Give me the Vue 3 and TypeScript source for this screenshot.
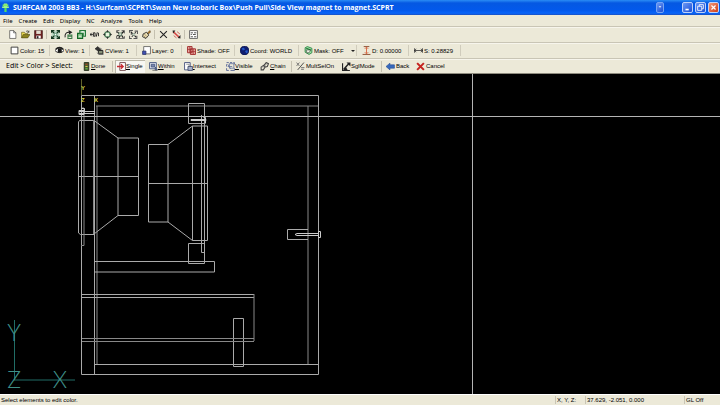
<script setup lang="ts">
interface Shape { d: string; f?: string; s?: string; w?: number }
interface Tool { icon: string; label: string }

const K = '#222'
const icons: Record<string, Shape[]> = {
  logo: [{ d: 'M5 1h6v5h3v3H2V6h3z', f: '#9ff58a' }, { d: 'M6 9h4v7H6z', f: '#52e060' }, { d: 'M3 4h10', s: '#7ee86a', w: 3 }],
  file: [{ d: 'M3 1h7l4 4v10H3z', f: '#fff', s: K }, { d: 'M10 1v4h4', s: K }],
  open: [{ d: 'M1 14V4h5l1 2h5v3', f: '#e8d850', s: '#554c10' }, { d: 'M1 14l3-6h12l-4 6z', f: '#8d8420', s: '#4a4410' }, { d: 'M9 3c2-3 4-1 5 1M14 1v3h-3', s: K, w: 1.2 }],
  save: [{ d: 'M1 1h14v14H1z', f: '#6d2222', s: '#301010' }, { d: 'M4 1h8v6H4z', f: '#e4ddd0' }, { d: 'M4 10h8v5H4z', f: '#fff' }, { d: 'M5 11h3v4H5z', f: '#222' }],
  zoomall: [{ d: 'M1 1h14v14H1z', f: '#bcd8c4' }, { d: 'M1 5V1h5M10 1h5v4M15 11v4h-5M6 15H1v-4M2 2l4 4M14 2l-4 4M14 14l-4-4M2 14l4-4', s: '#143820', w: 2.2 }, { d: 'M6 6h4v4H6z', f: '#fff', s: '#27734a' }],
  rotate: [{ d: 'M2 13c-1-6 2-9 7-9', s: K, w: 1.8 }, { d: 'M8 0l7 4-6 4z', f: K }, { d: 'M7 14V9h7v6H7zM8 11h6', s: '#387846', w: 1.8 }],
  copy: [{ d: 'M1 6h9v9H1z', f: '#80bd83', s: '#136626', w: 2 }, { d: 'M5 1h10v10h-4V6H5z', f: '#d3ead2', s: '#25783a', w: 2 }, { d: 'M3 11h5M8 3h4', s: '#fff', w: 1.5 }],
  pan: [{ d: 'M0 8h5M3 5L0 8l3 3', s: K, w: 1.6 }, { d: 'M6 5h3v6H6zM11 12l2-8M15 5v6', s: '#222', w: 1.7 }],
  center: [{ d: 'M8 0l3 4H5zM8 16l3-4H5zM0 8l4-3v6zM16 8l-4-3v6z', f: K }, { d: 'M4 4h8v8H4z', s: '#39764c', w: 1.8 }, { d: 'M5 5h6v6H5z', f: '#e7f4dd' }],
  window: [{ d: 'M1 5V1h5M10 1h5v5M1 10v5h14v-4', s: '#555', w: 1.5 }, { d: 'M2 3l5 5M14 2L8 9M5 14l4-6 4 6M10 4h4M2 10h4', s: K, w: 2 }, { d: 'M5 5h5v5H5z', f: '#cfd8ca', s: '#50785c' }],
  previous: [{ d: 'M1 5V1h6M10 2h5v5M14 10v5H8M5 15H1v-5', s: '#555', w: 1.8 }, { d: 'M3 3l10 10M5 12l7-8M3 7h6', s: K, w: 2 }, { d: 'M6 6h5v4H6z', f: '#bccdbb' }],
  brush: [{ d: 'M10 5l4-4 1 3-4 3z', f: '#b87b28', s: '#493717' }, { d: 'M2 7l6-3 4 5-5 6-6-3z', f: '#eee1b5', s: K, w: 1.5 }, { d: 'M4 7l5 5M3 10l4 4', s: '#7a653b' }],
  cross: [{ d: 'M2 2l12 12M14 2L2 14', s: '#222', w: 1.9 }],
  trim: [{ d: 'M2 3l11 10', s: '#d64a48', w: 2.8 }, { d: 'M1 1h5L2 6zM15 15V9l-5 5z', f: '#222' }, { d: 'M9 3l5 4M3 10l5 4', s: '#c63e38', w: 1.3 }],
  list: [{ d: 'M1 1h14v14H1z', f: '#fff', s: '#555', w: 1.5 }, { d: 'M3 5h4M9 5h4M3 8h2M7 8h5M3 12h4M9 12h4', s: '#444', w: 1.6 }],
  swatch: [{ d: 'M2 2h12v12H2z', f: '#fff', s: '#333', w: 1.6 }],
  eye: [{ d: 'M0 8c4-6 12-6 16 0-4 5-12 5-16 0', f: '#fff', s: K, w: 1.6 }, { d: 'M5 4h7v8H5z', f: '#191919' }, { d: 'M1 6c4-5 10-5 14 0', s: K, w: 2.2 }],
  cview: [{ d: 'M0 5l5-4 6 6-4 3z', f: '#333', s: K }, { d: 'M6 8h8v6H6z', f: '#88927a', s: K, w: 1.7 }, { d: 'M4 12l3 3h8M9 3l3 3', s: '#666', w: 1.7 }],
  layer: [{ d: 'M3 1h12v13H3z', f: '#fff', s: '#555', w: 1.4 }, { d: 'M1 9h6v6H1z', f: '#4050b4', s: '#293267', w: 1.3 }],
  shade: [{ d: 'M1 1h8v11H1zM6 5h9v10H6z', f: '#edb1a9', s: '#a12d2d', w: 1.7 }, { d: 'M1 6h8M5 1v11M6 10h9M11 5v10', s: '#a12d2d', w: 1.4 }],
  globe: [{ d: 'M8 0a8 8 0 1 0 .1 0', f: '#101e70', s: '#0b1440' }, { d: 'M3 4l4-1 2 3-4 2zM9 9l4-2 1 4-3 2z', f: '#2358c8' }],
  mask: [{ d: 'M2 3l4-2 8 3v8l-5 3-7-4z', f: '#9be4a0', s: '#2f854a', w: 1.6 }, { d: 'M4 7h8l-3 5H5z', f: '#eef7e8', s: '#333' }, { d: 'M4 4l8 3', s: '#236b39', w: 2 }],
  depth: [{ d: 'M3 1h10M1 15h14', s: '#8b4a2d', w: 1.6 }, { d: 'M8 2v12M5 5l3-3 3 3M5 11l3 3 3-3', s: '#d86a45', w: 1.7 }],
  scale: [{ d: 'M0 8h16M1 4v8M15 4v8M4 5L1 8l3 3M12 5l3 3-3 3', s: '#333', w: 1.4 }],
  done: [{ d: 'M4 1h8v14H4z', f: '#435b2d', s: '#242b1a', w: 1.6 }, { d: 'M6 3h4v2H6z', f: '#af3f28' }, { d: 'M6 7h4v2H6z', f: '#d5ca48' }, { d: 'M6 11h4v2H6z', f: '#63bd50' }],
  single: [{ d: 'M5 1h10v14H5z', f: '#fff', s: '#70484c', w: 1.6 }, { d: 'M0 8h10M7 4l4 4-4 4', s: '#c72b32', w: 2.4 }],
  within: [{ d: 'M1 1h12v11H1z', f: '#e3e7f2', s: '#44537e', w: 1.6 }, { d: 'M4 4h6v5H4zM11 9l4 5h-4z', f: '#7886ad', s: '#34436f', w: 1.2 }, { d: 'M6 15h9', s: '#444' }],
  intersect: [{ d: 'M1 1h10v13H1z', f: '#fff', s: '#44507a', w: 1.6 }, { d: 'M7 8h8v7H7z', f: '#a9b1c8', s: '#354065', w: 1.4 }, { d: 'M4 4h5v4', s: '#555' }],
  visible: [{ d: 'M1 1h4M7 1h4M13 1h2v3M1 4v4M1 11v4h4M8 15h7v-4', s: '#4d5c91', w: 1.5 }, { d: 'M3 4l5 8M6 3h8v8H6zM3 8h8', s: '#65739d', w: 1.5 }],
  chain: [{ d: 'M2 9l4-3 3 3-3 5H2zM7 6l4-5 4 2-2 5-4 1z', s: '#444', w: 1.9 }, { d: 'M5 10l6-6', s: '#777', w: 1.5 }],
  multi: [{ d: 'M3 14L14 1', s: '#333', w: 1.5 }, { d: 'M1 1l5 6M6 1L1 7M9 10h6M9 13h5', s: '#666', w: 1.5 }],
  mode: [{ d: 'M1 2v13h13', s: '#222', w: 2 }, { d: 'M3 13L12 3', s: '#222', w: 2.4 }, { d: 'M8 1h7v7zM2 14l5-5 3 5z', f: '#222' }],
  back: [{ d: 'M0 8l7-6v3h8v6H7v3z', f: '#3769bd', s: '#244b91' }],
  cancel: [{ d: 'M2 2l12 12M14 2L2 14', s: '#c5221e', w: 3.6 }],
}

const menus = ['File', 'Create', 'Edit', 'Display', 'NC', 'Analyze', 'Tools', 'Help']
const groups: Tool[][] = [
  [{ icon: 'file', label: 'New' }, { icon: 'open', label: 'Open' }, { icon: 'save', label: 'Save' }],
  [{ icon: 'zoomall', label: 'Zoom all' }, { icon: 'rotate', label: 'Rotate' }, { icon: 'copy', label: 'Copy view' }, { icon: 'pan', label: 'Pan' },
    { icon: 'center', label: 'Center' }, { icon: 'window', label: 'Zoom window' }, { icon: 'previous', label: 'Previous view' }, { icon: 'brush', label: 'Repaint' }],
  [{ icon: 'cross', label: 'Delete' }, { icon: 'trim', label: 'Trim' }],
  [{ icon: 'list', label: 'Properties' }],
]
const settings: Tool[] = [
  { icon: 'swatch', label: 'Color: 15' }, { icon: 'eye', label: 'View: 1' }, { icon: 'cview', label: 'CView: 1' },
  { icon: 'layer', label: 'Layer: 0' }, { icon: 'shade', label: 'Shade: OFF' }, { icon: 'globe', label: 'Coord: WORLD' },
  { icon: 'mask', label: 'Mask: OFF' }, { icon: 'depth', label: 'D: 0.00000' }, { icon: 'scale', label: 'S: 0.28829' },
]
const selection: Tool[] = [
  { icon: 'done', label: 'Done' }, { icon: 'single', label: 'Single' }, { icon: 'within', label: 'Within' },
  { icon: 'intersect', label: 'Intersect' }, { icon: 'visible', label: 'Visible' }, { icon: 'chain', label: 'Chain' },
  { icon: 'multi', label: 'MultSelOn' }, { icon: 'mode', label: 'SglMode' }, { icon: 'back', label: 'Back' }, { icon: 'cancel', label: 'Cancel' },
]
const underlined = ['Done', 'Single', 'Within', 'Intersect', 'Visible', 'Chain']
</script>

<template>
  <div class="app">
    <header class="title">
      <svg class="icon" viewBox="0 0 16 16"><path v-for="(p, i) in icons.logo" :key="i" :d="p.d" :fill="p.f ?? 'none'" :stroke="p.s ?? 'none'" :stroke-width="p.w ?? 1" /></svg>
      <h1>SURFCAM 2003 BB3 - H:\Surfcam\SCPRT\Swan New Isobaric Box\Push Pull\Side View magnet to magnet.SCPRT</h1>
      <button class="win drop" aria-label="Options"><svg viewBox="0 0 11 11"><path d="M3 3h5L5.500 6z" fill="#fff" /></svg></button>
      <button class="win" aria-label="Minimize"><svg viewBox="0 0 11 11"><path d="M3 8h4" stroke="#fff" stroke-width="2" /></svg></button>
      <button class="win" aria-label="Restore"><svg viewBox="0 0 11 11"><path d="M4 4V2h5v5H7M2 4h5v5H2z" stroke="#fff" fill="none" /></svg></button>
      <button class="win close" aria-label="Close"><svg viewBox="0 0 11 11"><path d="M3 3l5 5M8 3L3 8" stroke="#fff" stroke-width="1.500" /></svg></button>
    </header>

    <nav class="menu"><button v-for="m in menus" :key="m">{{ m }}</button></nav>

    <div class="bar main">
      <div v-for="(g, n) in groups" :key="n" class="group">
        <button v-for="t in g" :key="t.icon" :aria-label="t.label">
          <svg class="icon" viewBox="0 0 16 16"><path v-for="(p, i) in icons[t.icon]" :key="i" :d="p.d" :fill="p.f ?? 'none'" :stroke="p.s ?? 'none'" :stroke-width="p.w ?? 1" /></svg>
        </button>
      </div>
    </div>

    <div class="bar settings">
      <button v-for="t in settings" :key="t.icon" class="tool">
        <svg class="icon" viewBox="0 0 16 16"><path v-for="(p, i) in icons[t.icon]" :key="i" :d="p.d" :fill="p.f ?? 'none'" :stroke="p.s ?? 'none'" :stroke-width="p.w ?? 1" /></svg>
        <span>{{ t.label }}</span>
        <svg v-if="t.icon === 'mask'" class="caret" viewBox="0 0 4 4"><path d="M0 1h4L2 3z" fill="#222" /></svg>
      </button>
    </div>

    <div class="bar selection">
      <span class="prompt">Edit &gt; Color &gt; Select:</span>
      <button v-for="t in selection" :key="t.icon" class="tool" :class="t.icon">
        <svg class="icon" viewBox="0 0 16 16"><path v-for="(p, i) in icons[t.icon]" :key="i" :d="p.d" :fill="p.f ?? 'none'" :stroke="p.s ?? 'none'" :stroke-width="p.w ?? 1" /></svg>
        <span v-if="underlined.includes(t.label)"><u>{{ t.label[0] }}</u>{{ t.label.slice(1) }}</span>
        <span v-else>{{ t.label }}</span>
      </button>
    </div>

    <main class="view">
      <svg class="drawing" role="img" aria-label="Side view of speaker enclosure">
        <g class="part">
          <!-- Enclosure -->
          <path d="M81.500 21.500h237v279h-237zM94.500 21.500v279M94.500 290.500h224" />
          <path class="dim" d="M97 32v258M96 32h222M308 32v258" />
          <!-- Left driver -->
          <path d="M94 46.500H79.500L78.500 48v111l2 1.500H94M94 46.500l24 17.500M118 141.500L94 160M78.500 102.500h60M118 64h20.500v77.500H118z" />
          <path class="dim" d="M82 34h2v137.500h-3M93.500 46v114" />
          <path class="bolt" d="M79 37.500h16M79 39.500h16M79 36.500h5v4h-5zM81.500 34.500h3v4" />
          <!-- Right driver -->
          <path d="M168 70.500l24.500-18.500h15v114.500h-15L168 148M192.500 52v114.500M148.500 70.500h19.500V148h-19.500zM148.500 109.500h59" />
          <path d="M201.500 41v137.500h3V41M188.500 29.500h16v20h-16zM188.500 169.500h16v20h-16z" />
          <path class="bolt" d="M191 45.500h15v1h-15zM203.500 43.500h2v6" />
          <!-- Shelf and port -->
          <path d="M94.500 187.500h120v10.500h-120M233.500 244.500h10v48h-10zM82 220.500h172M82 223.500h172" />
          <path class="dim" d="M254 220v47M82 264.500h172M82 267.500h172" />
          <!-- Rear bolt -->
          <path d="M308 155.500h-20.500v10H308" />
          <path class="bolt" d="M318 159.500h-21l-2 1 2 1h21M318.500 157.500h2v6h-2z" />
        </g>
        <path class="cursor" d="M0 42.500h4000M472.500 0v4000" />
        <path class="origin" d="M81.500 5v16" />
        <g class="mark"><text x="81" y="16">Y</text><text x="81" y="28">Z</text><text x="94" y="28">X</text></g>
        <path class="axis" d="M14.500 246v60M14 306h61" />
        <g class="axis-label"><text x="14" y="267">Y</text><text x="14" y="314">Z</text><text x="60" y="314">X</text></g>
      </svg>
    </main>

    <footer class="status">
      <span class="message">Select elements to edit color.</span>
      <span>X, Y, Z:</span><span>37.629, -2.051, 0.000</span><span class="gl">GL Off</span>
    </footer>
  </div>
</template>

<style>
body { margin: 0; background: #000; }
</style>

<style scoped>
* { box-sizing: border-box; }
.app { display: flex; flex-direction: column; height: 100vh; min-width: 480px; overflow: hidden; font: 6px/8px "Liberation Sans", Arial, sans-serif; color: #000; background: #ece9d8; }
button { display: flex; align-items: center; margin: 0; padding: 0; border: 0; background: none; color: inherit; font: inherit; white-space: nowrap; }
.icon { width: 9px; height: 9px; flex: none; }
.title { display: flex; align-items: center; height: 15px; flex: none; padding: 0 1px 0 1px; gap: 2px; background: linear-gradient(#2b8cf5 0, #0558e2 20%, #0359ec 70%, #0865fa 88%, #1b50c0 100%); }
.title h1 { flex: 1; margin: 0; padding-left: 1px; color: #fff; font: bold 7px/11px "Open Sans", sans-serif; white-space: nowrap; overflow: hidden; }
.win { width: 11px; height: 11px; border: 1px solid #bdd2fa; border-radius: 2px; background: linear-gradient(135deg, #6a98f5, #1c4fd5); }
.win svg { width: 9px; height: 9px; }
.drop { width: 8px; margin-right: 16px; border-color: #76a4f5; }
.close { background: linear-gradient(135deg, #f09a7c, #d03c15); }
.menu { display: flex; align-items: center; height: 11px; flex: none; gap: 6px; padding-left: 3px; font-family: "Noto Sans", sans-serif; }
.bar { flex: none; align-items: center; height: 16px; border-top: 1px solid #c9c5b5; box-shadow: inset 0 1px #f7f5ec; }
.main { display: flex; padding-left: 8px; }
.group { display: flex; gap: 4px; padding-right: 3px; margin-right: 4px; border-right: 1px solid #c5c1b0; }
.group:last-child { border: 0; }
.settings { display: grid; grid-template-columns: 45px 40px 47px 45px 53px 64px 58px 52px 52px; padding-left: 5px; }
.tool { gap: 1px; height: 11px; padding-left: 5px; }
.settings .tool { border-right: 1px solid #d0ccbc; }
.caret { width: 4px; height: 4px; margin-left: 6px; }
.selection { display: grid; height: 16px; grid-template-columns: 74px 33px 34px 35px 42px 34px 34px 48px 42px 32px 40px; padding-left: 6px; border-bottom: 1px solid #8e8b7e; }
.prompt { font: 7px/8px "Noto Sans", sans-serif; white-space: nowrap; }
.selection .tool { gap: 0; padding-left: 2px; }
.selection .done { border-right: 1px solid #c5c1b0; }
.selection .single { margin: 0 2px; padding-left: 2px; height: 13px; background: #f8f7f2; box-shadow: inset 1px 1px #bbb7a8; }
.selection .chain, .selection .mode { border-right: 1px solid #c5c1b0; }
.selection .multi, .selection .back { gap: 1px; padding-left: 4px; }
.selection .cancel, .selection .chain { gap: 1px; }
.view { flex: 1; min-height: 0; background: #000; }
.drawing { display: block; width: 100%; height: 100%; }
.drawing path { fill: none; stroke: #aaa; stroke-width: 1px; }
.drawing .dim { stroke: #888; }
.drawing .bolt { stroke: #ccc; }
.drawing .cursor { stroke: #b4b4b4; }
.drawing .origin { stroke: #62622a; }
.mark { fill: #d5d548; font: bold 6px "Liberation Sans", sans-serif; }
.drawing .axis { stroke: #216d66; }
.axis-label { fill: #3f8f88; font: 300 23px Lato, sans-serif; text-anchor: middle; }
.status { display: flex; align-items: center; height: 11px; flex: none; border-top: 1px solid #fff; }
.status span { width: 30px; padding-left: 1px; border-left: 1px solid #c9c5b5; white-space: nowrap; }
.status .message { flex: 1; border: 0; }
.status span:nth-child(3) { width: 99px; }
.status .gl { width: 36px; }
</style>
